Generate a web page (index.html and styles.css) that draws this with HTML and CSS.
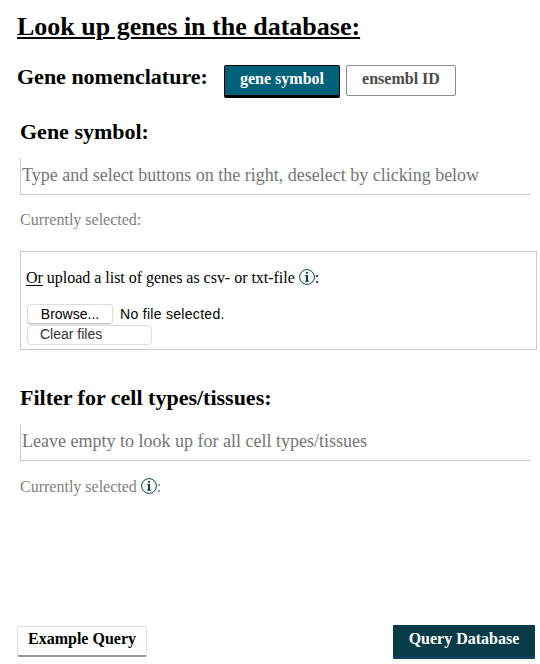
FILE: index.html
```html
<!DOCTYPE html>
<html lang="en">
<head>
<meta charset="utf-8">
<title>Gene lookup</title>
<link rel="stylesheet" href="styles.css">
</head>
<body>
<main class="page">
  <h1 class="title"><span>Look up genes in the database:</span></h1>
  <div class="nomenclature">
    <h2 class="heading nomenclature-label"><span>Gene nomenclature:</span></h2>
    <button class="toggle toggle-active" type="button"><span>gene symbol</span></button>
    <button class="toggle" type="button"><span>ensembl ID</span></button>
  </div>
  <section class="field">
    <h2 class="heading"><span>Gene symbol:</span></h2>
    <div class="search search-genes"><span>Type and select buttons on the right, deselect by clicking below</span></div>
    <p class="selected"><span>Currently selected:</span></p>
  </section>
  <section class="upload">
    <p class="upload-text"><span><u>Or</u> upload a list of genes as csv- or txt-file</span> <svg class="info" viewBox="0 0 16 16"><circle cx="8" cy="8" r="7.4"/><path class="stem" d="M8 2.9v1.9M8 6v6.5"/><path d="M6.2 6.5h1.8M6 12.1h4"/></svg>:</p>
    <div class="file-row">
      <button class="native browse" type="button">Browse...</button>
      <span class="file-name">No file selected.</span>
    </div>
    <button class="native clear" type="button">Clear files</button>
  </section>
  <section class="field filter">
    <h2 class="heading heading-filter"><span>Filter for cell types/tissues:</span></h2>
    <div class="search search-cells"><span>Leave empty to look up for all cell types/tissues</span></div>
    <p class="selected selected-cells"><span>Currently selected</span> <svg class="info" viewBox="0 0 16 16"><circle cx="8" cy="8" r="7.4"/><path class="stem" d="M8 2.9v1.9M8 6v6.5"/><path d="M6.2 6.5h1.8M6 12.1h4"/></svg>:</p>
  </section>
  <footer class="actions">
    <button class="action example" type="button">Example Query</button>
    <button class="action query" type="button">Query Database</button>
  </footer>
</main>
</body>
</html>
```
FILE: styles.css
```css
* { box-sizing: border-box; }
body {
  margin: 0;
  background: #fff;
  color: #000;
  font-family: "Liberation Serif", "Times New Roman", serif;
}
h1, h2, p { margin: 0; white-space: nowrap; }
button { margin: 0; padding: 0; font-family: inherit; white-space: nowrap; }
.page { height: 664px; padding: 12px 3px 0 17px; display: flex; flex-direction: column; }
.title {
  font-size: 26px;
  line-height: 30px;
  text-decoration: underline;
  text-decoration-thickness: 2px;
  text-underline-offset: 2px;
}
.heading { font-size: 22px; line-height: 26px; }
.nomenclature { display: flex; align-items: flex-start; margin-top: 23px; height: 33px; }
.nomenclature-label { width: 207px; margin-top: -1px; }
.toggle {
  width: 110px;
  height: 31px;
  border: 1px solid #8b8b8b;
  border-radius: 2px;
  background: #fff;
  color: #4b4b4b;
  font-size: 16px;
  font-weight: bold;
  line-height: 18px;
  padding-bottom: 3px;
}
.toggle-active {
  width: 116px;
  height: 33px;
  margin-right: 6px;
  border-color: #000;
  border-bottom-width: 3px;
  background: #00627a;
  color: #fff;
}
.field { margin-left: 3px; margin-top: 21px; }
.search {
  width: 510px;
  height: 37px;
  margin-top: 13px;
  padding-left: 1px;
  border-left: 1px solid #c8c8c8;
  border-bottom: 1px solid #c8c8c8;
  color: #757575;
  font-size: 18px;
  line-height: 35px;
  white-space: nowrap;
}
.selected { height: 20px; margin-top: 15px; color: #808080; font-size: 16px; line-height: 20px; }
.selected-cells { margin-top: 16px; }
.info { width: 16px; height: 16px; vertical-align: -2px; fill: none; stroke: #07424f; stroke-width: 1; }
.info .stem { stroke-width: 2; }
.upload {
  width: 517px;
  height: 99px;
  margin: 21px 0 0 3px;
  padding: 16px 0 0 5px;
  border: 1px solid #c8c8c8;
}
.upload-text { height: 20px; font-size: 16px; line-height: 20px; letter-spacing: -0.02px; }
.upload-text u { text-underline-offset: 2px; }
.file-row { display: flex; margin-top: 16px; height: 21px; }
.native {
  display: block;
  height: 20px;
  margin-left: 1px;
  border: 1px solid #dcdcdc;
  border-radius: 4px;
  background: #fff;
  color: #000;
  font-family: "Liberation Sans", Arial, sans-serif;
  font-size: 14px;
  line-height: 18px;
}
.browse { width: 86px; border-bottom-color: #c4c4c4; box-shadow: 0 1px 1px #e4e4e4; }
.file-name { margin-left: 7px; font: 14px/20px "Liberation Sans", Arial, sans-serif; letter-spacing: 0.3px; }
.clear { width: 125px; padding: 0 0 2px 12px; line-height: 16px; text-align: left; color: #333; }
.filter { margin-top: 35px; }
.actions { display: flex; justify-content: space-between; margin: 128px 2px 0 0; }
.action { font-size: 16px; font-weight: bold; line-height: 18px; }
.example {
  width: 130px;
  height: 31px;
  margin-top: 1px;
  padding-bottom: 4px;
  border: 1px solid #ddd;
  border-bottom: 2px solid #999;
  border-radius: 2px;
  background: #fff;
  color: #000;
}
.query {
  width: 142px;
  height: 34px;
  padding-bottom: 4px;
  border: 0 solid #0b4261;
  border-bottom-width: 3px;
  border-radius: 1px;
  background: #073b47;
  color: #fff;
}
```
